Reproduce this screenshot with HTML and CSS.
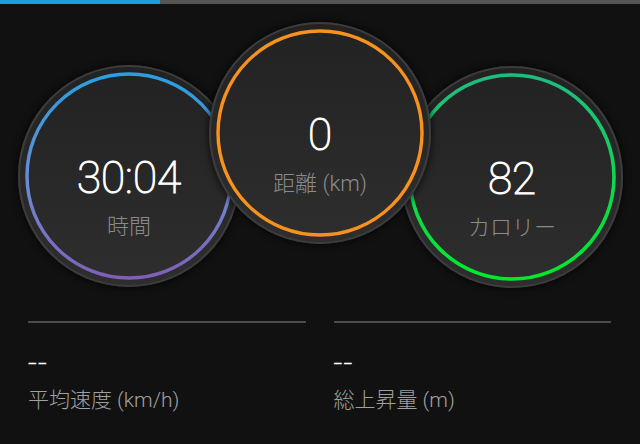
FILE: index.html
```html
<!DOCTYPE html>
<html lang="ja">
<head>
<meta charset="utf-8">
<link rel="stylesheet" href="styles.css">
</head>
<body>
<div class="progress"><div class="progress-fill"></div></div>
<div class="gauges">
  <div class="gauge gauge-left">
    <svg class="ring" viewBox="0 0 222 222">
      <defs>
        <linearGradient id="gl" x1="0" y1="0" x2="0" y2="1">
          <stop offset="0" stop-color="#27a0e2"/>
          <stop offset="0.55" stop-color="#6d8ad2"/>
          <stop offset="1" stop-color="#7f5fb8"/>
        </linearGradient>
      </defs>
      <circle cx="111" cy="111" r="102" fill="none" stroke="url(#gl)" stroke-width="3.4"/>
    </svg>
    <div class="value">30:04</div>
    <div class="label">時間</div>
  </div>
  <div class="gauge gauge-center">
    <svg class="ring" viewBox="0 0 222 222">
      <circle cx="111" cy="111" r="102" fill="none" stroke="#f7921f" stroke-width="3.4"/>
    </svg>
    <div class="value">0</div>
    <div class="label">距離 (km)</div>
  </div>
  <div class="gauge gauge-right">
    <svg class="ring" viewBox="0 0 222 222">
      <defs>
        <linearGradient id="gr" x1="0" y1="0" x2="0" y2="1">
          <stop offset="0" stop-color="#1fbb80"/>
          <stop offset="0.5" stop-color="#12d455"/>
          <stop offset="1" stop-color="#00ea2a"/>
        </linearGradient>
      </defs>
      <circle cx="111" cy="111" r="102" fill="none" stroke="url(#gr)" stroke-width="3.6"/>
    </svg>
    <div class="value">82</div>
    <div class="label">カロリー</div>
  </div>
</div>
<div class="stats">
  <div class="stat">
    <div class="stat-value">--</div>
    <div class="stat-label">平均速度 (km/h)</div>
  </div>
  <div class="stat">
    <div class="stat-value">--</div>
    <div class="stat-label">総上昇量 (m)</div>
  </div>
</div>
</body>
</html>
```
FILE: styles.css
```css
html, body {
  margin: 0;
  padding: 0;
}
body {
  width: 640px;
  height: 444px;
  overflow: hidden;
  background: #111111;
  font-family: Roboto, "Noto Sans CJK JP", sans-serif;
  color: #ffffff;
}
.progress {
  height: 4px;
  background: #555555;
}
.progress-fill {
  width: 160px;
  height: 4px;
  background: #1d9ce0;
}
.gauges {
  display: flex;
  align-items: flex-start;
  padding-left: 18px;
  margin-top: 18px;
}
.gauge {
  position: relative;
  flex: none;
  width: 222px;
  height: 222px;
  box-sizing: border-box;
  border-radius: 50%;
  background: linear-gradient(to bottom, #222222, #2e2e2e);
  box-shadow: inset 0 0 0 2px #3c3c3c, 0 0 6px 2px rgba(0, 0, 0, 0.55);
  display: flex;
  flex-direction: column;
  align-items: center;
  padding-top: 87px;
}
.gauge-left {
  margin-top: 43px;
  margin-right: -31px;
}
.gauge-center {
  z-index: 2;
}
.gauge-right {
  margin-top: 44px;
  margin-left: -30px;
}
.ring {
  position: absolute;
  left: 0;
  top: 0;
  width: 222px;
  height: 222px;
}
.value {
  position: relative;
  font-family: Roboto, sans-serif;
  font-size: 44px;
  font-weight: 100;
  -webkit-text-stroke: 1.1px #ffffff;
  line-height: 52px;
  color: #ffffff;
}
.label {
  position: relative;
  margin-top: 9px;
  font-family: Roboto, "Noto Sans CJK JP", sans-serif;
  font-size: 22px;
  font-weight: 300;
  line-height: 28px;
  color: #8a8a8a;
}
.stats {
  display: grid;
  grid-template-columns: 1fr 1fr;
  column-gap: 28px;
  padding: 0 29px 0 28px;
  margin-top: 33px;
}
.stat {
  border-top: 2px solid #4b4b4b;
  padding-top: 25px;
}
.stat-value {
  font-family: Roboto, sans-serif;
  font-size: 30px;
  line-height: 30px;
  font-weight: 100;
  -webkit-text-stroke: 0.6px #ffffff;
  letter-spacing: 1px;
  color: #ffffff;
}
.stat-label {
  margin-top: 8px;
  font-family: Roboto, "Noto Sans CJK JP", sans-serif;
  font-size: 21px;
  line-height: 28px;
  font-weight: 300;
  color: #a0a0a0;
}
```
